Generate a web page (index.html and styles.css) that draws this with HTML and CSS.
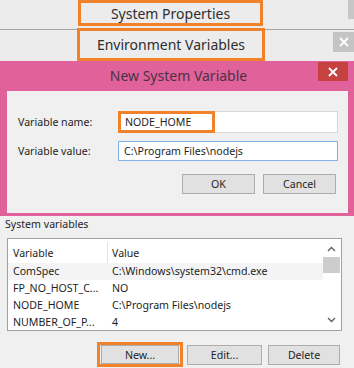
FILE: index.html
```html
<!DOCTYPE html>
<html>
<head>
<meta charset="utf-8">
<link rel="stylesheet" href="styles.css">
</head>
<body>
<div class="screen">
  <div class="band band-top">
    <div class="hl hl-sys">System Properties</div>
    <div class="edge-block"></div>
  </div>
  <div class="band band-env">
    <div class="hl hl-env">Environment Variables</div>
    <div class="env-close">
      <svg width="10" height="10" viewBox="0 0 10 10"><path d="M1 1L9 9M9 1L1 9" stroke="#fff" stroke-width="1.8"/></svg>
    </div>
  </div>
  <div class="dialog">
    <div class="titlebar">
      <div class="title">New System Variable</div>
      <div class="close">
        <svg width="10" height="10" viewBox="0 0 10 10"><path d="M1 1L9 9M9 1L1 9" stroke="#fff" stroke-width="1.8"/></svg>
      </div>
    </div>
    <div class="panel">
      <div class="field field-name">
        <span class="lbl">Variable name:</span>
        <div class="input input-name"><span class="hl-input">NODE_HOME</span></div>
      </div>
      <div class="field field-value">
        <span class="lbl">Variable value:</span>
        <div class="input input-value">C:\Program Files\nodejs</div>
      </div>
      <div class="btns">
        <div class="btn btn-ok">OK</div>
        <div class="btn btn-cancel">Cancel</div>
      </div>
    </div>
  </div>
  <div class="lower">
    <div class="group-label">System variables</div>
    <div class="list">
      <div class="rows">
        <div class="row head"><span class="c1">Variable</span><span class="c2">Value</span></div>
        <div class="row sel"><span class="c1">ComSpec</span><span class="c2">C:\Windows\system32\cmd.exe</span></div>
        <div class="row"><span class="c1">FP_NO_HOST_C...</span><span class="c2">NO</span></div>
        <div class="row"><span class="c1">NODE_HOME</span><span class="c2">C:\Program Files\nodejs</span></div>
        <div class="row"><span class="c1">NUMBER_OF_P...</span><span class="c2">4</span></div>
      </div>
      <div class="scrollbar">
        <svg class="arrow" width="9" height="6" viewBox="0 0 9 6"><path d="M1 5L4.5 1.5L8 5" fill="none" stroke="#606060" stroke-width="1.4"/></svg>
        <div class="thumb"></div>
        <div class="track"></div>
        <svg class="arrow" width="9" height="6" viewBox="0 0 9 6"><path d="M1 1L4.5 4.5L8 1" fill="none" stroke="#606060" stroke-width="1.4"/></svg>
      </div>
    </div>
    <div class="lbtns">
      <div class="hl-new"><div class="btn btn-new">New...</div></div>
      <div class="btn btn-edit">Edit...</div>
      <div class="btn btn-del">Delete</div>
    </div>
  </div>
</div>
</body>
</html>
```

FILE: styles.css
```css
* { box-sizing: border-box; }
html, body { margin: 0; padding: 0; background: #f0f0f0; }
body { font-family: "Noto Sans", "Open Sans", sans-serif; color: #1e1e1e; }
.screen { width: 354px; height: 368px; overflow: hidden; display: flex; flex-direction: column; }

.band { background: #ececec; display: flex; }
.band-top { height: 29px; align-items: flex-start; }
.hl { border: 3px solid #f0822c; display: flex; align-items: center; justify-content: center; font-size: 14px; color: #2e2e2e; }
.hl-sys { margin-left: 78px; width: 185px; height: 26px; padding-top: 1px; }
.edge-block { margin-left: auto; width: 6px; height: 19px; background: #c6c6c6; }

.band-env { height: 32px; border-top: 1px solid #a6a6a6; align-items: flex-start; }
.hl-env { margin-left: 77px; margin-top: -2px; width: 188px; height: 33px; background: #ececec; }
.env-close { margin-left: auto; margin-top: 2px; width: 21px; height: 20px; background: #c4c4c4; display: flex; align-items: center; justify-content: center; }

.dialog { background: #e1619b; height: 155px; padding: 0 6px 3px 7px; display: flex; flex-direction: column; }
.titlebar { height: 30px; display: flex; align-items: flex-start; position: relative; }
.title { flex: 1; text-align: center; font-size: 14px; color: #4a3342; padding-top: 5px; padding-left: 2px; }
.close { position: absolute; right: 0; top: 1px; width: 30px; height: 19px; background: #c7423f; display: flex; align-items: center; justify-content: center; }

.panel { flex: 1; background: #f0f0f0; padding: 20px 0 0 11px; font-size: 10.6px; }
.field { display: flex; align-items: center; }
.lbl { width: 100px; }
.input { width: 220px; background: #fff; display: flex; align-items: center; }
.input-name { height: 22px; border: 1px solid #d7d7d7; }
.hl-input { width: 97px; height: 22px; margin: -1px 0 0 -1px; border: 3px solid #f0822c; display: flex; align-items: center; padding-left: 4px; }
.field-value { margin-top: 8px; }
.input-value { height: 20px; border: 1px solid #7eb4ea; padding-left: 5px; }
.btns { display: flex; gap: 8px; margin-top: 13px; padding-left: 164px; }
.btn { height: 20px; border: 1px solid #adadad; background: #e1e1e1; display: flex; align-items: center; justify-content: center; font-size: 10.6px; }
.btn-ok, .btn-cancel { width: 73px; }

.lower { flex: 1; padding: 1px 0 0 0; font-size: 10.6px; }
.group-label { padding-left: 5px; height: 21px; line-height: 15px; }
.list { margin-left: 7px; width: 335px; height: 93px; border: 1px solid #a0a0a0; background: #fff; display: flex; }
.rows { flex: 1; display: flex; flex-direction: column; }
.row { display: flex; height: 17px; align-items: center; }
.row.head { height: 24px; padding-top: 3px; }
.row.head .c1 { border-right: 1px solid #e3e3e3; height: 22px; display: flex; align-items: center; }
.row.sel { background: #f4f4f4; }
.c1 { width: 100px; padding-left: 5px; }
.c2 { padding-left: 4px; }
.scrollbar { width: 17px; margin-right: 1px; background: #fff; display: flex; flex-direction: column; align-items: center; padding-top: 7px; }
.arrow { flex: none; }
.thumb { width: 17px; height: 16px; background: #cdcdcd; margin-top: 5px; }
.track { flex: 1; }
.scrollbar .arrow:last-child { margin-bottom: 7px; }

.lbtns { display: flex; align-items: center; margin-top: 11px; padding-left: 97px; }
.hl-new { border: 3px solid #f0822c; width: 86px; height: 25px; display: flex; align-items: center; justify-content: center; }
.btn-new { width: 78px; height: 19px; }
.btn-edit { width: 75px; margin-left: 4px; }
.btn-del { width: 72px; margin-left: 6px; }
```
